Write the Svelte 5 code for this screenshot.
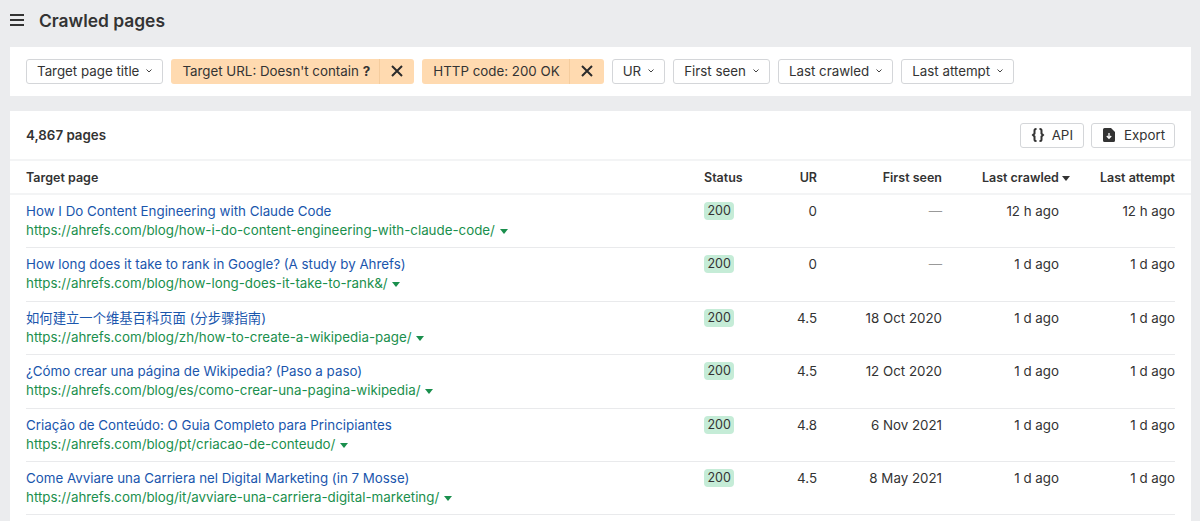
<script>
  const filters = ['UR', 'First seen', 'Last crawled', 'Last attempt'];
  const rows = [
    { title: 'How I Do Content Engineering with Claude Code', url: 'https://ahrefs.com/blog/how-i-do-content-engineering-with-claude-code/', ur: '0', first: '—', crawled: '12 h ago', attempt: '12 h ago' },
    { title: 'How long does it take to rank in Google? (A study by Ahrefs)', url: 'https://ahrefs.com/blog/how-long-does-it-take-to-rank&/', ur: '0', first: '—', crawled: '1 d ago', attempt: '1 d ago' },
    { title: '如何建立一个维基百科页面 (分步骤指南)', url: 'https://ahrefs.com/blog/zh/how-to-create-a-wikipedia-page/', ur: '4.5', first: '18 Oct 2020', crawled: '1 d ago', attempt: '1 d ago' },
    { title: '¿Cómo crear una página de Wikipedia? (Paso a paso)', url: 'https://ahrefs.com/blog/es/como-crear-una-pagina-wikipedia/', ur: '4.5', first: '12 Oct 2020', crawled: '1 d ago', attempt: '1 d ago' },
    { title: 'Criação de Conteúdo: O Guia Completo para Principiantes', url: 'https://ahrefs.com/blog/pt/criacao-de-conteudo/', ur: '4.8', first: '6 Nov 2021', crawled: '1 d ago', attempt: '1 d ago' },
    { title: 'Come Avviare una Carriera nel Digital Marketing (in 7 Mosse)', url: 'https://ahrefs.com/blog/it/avviare-una-carriera-digital-marketing/', ur: '4.5', first: '8 May 2021', crawled: '1 d ago', attempt: '1 d ago' }
  ];
</script>

{#snippet chevron()}
  <svg class="chev" width="6" height="4" viewBox="0 0 6 4"><path d="M.5.5L3 3 5.500.5" fill="none" stroke="currentColor" stroke-width="1" /></svg>
{/snippet}

{#snippet cross()}
  <svg width="12" height="12" viewBox="0 0 12 12"><path d="M1 1l10 10M11 1L1 11" fill="none" stroke="#2b2b2b" stroke-width="2" /></svg>
{/snippet}

<div class="page">
  <header class="top">
    <svg class="menu" width="14" height="12" viewBox="0 0 14 12"><path d="M0 1h14M0 6h14M0 11h14" fill="none" stroke="#333" stroke-width="1.8" /></svg>
    <h1>Crawled pages</h1>
  </header>

  <section class="filters">
    <button class="btn">Target page title {@render chevron()}</button>
    <div class="active">
      <span class="label">Target URL: Doesn't contain <b>?</b></span>
      <span class="close">{@render cross()}</span>
    </div>
    <div class="active">
      <span class="label">HTTP code: 200 OK</span>
      <span class="close">{@render cross()}</span>
    </div>
    {#each filters as f}
      <button class="btn">{f} {@render chevron()}</button>
    {/each}
  </section>

  <section class="results">
    <div class="summary">
      <strong>4,867 pages</strong>
      <div class="actions">
        <button class="btn api">
          <svg width="14" height="14" viewBox="0 0 14 14"><path d="M5.500 1H5a1.500 1.500 0 0 0-1.500 1.500v3L2 7l1.500 1.500v3A1.500 1.500 0 0 0 5 13h.5M8.500 1H9a1.500 1.500 0 0 1 1.500 1.500v3L12 7l-1.500 1.500v3A1.500 1.500 0 0 1 9 13h-.5" fill="none" stroke="#333" stroke-width="2" /></svg>
          API
        </button>
        <button class="btn export">
          <svg width="12" height="14" viewBox="0 0 12 14"><path d="M1.500 0H8l4 4v8.500a1.500 1.500 0 0 1-1.500 1.500h-9A1.500 1.500 0 0 1 0 12.500v-11A1.500 1.500 0 0 1 1.500 0z" fill="#333" /><path d="M6 5v5M3.800 8L6 10.300 8.200 8" fill="none" stroke="#fff" stroke-width="1.300" /></svg>
          Export
        </button>
      </div>
    </div>

    <div class="grid head">
      <div>Target page</div>
      <div>Status</div>
      <div class="num">UR</div>
      <div class="num">First seen</div>
      <div class="num">Last crawled <i class="sort"></i></div>
      <div class="num">Last attempt</div>
    </div>

    {#each rows as r}
      <div class="grid row">
        <div>
          <div class="title">{r.title}</div>
          <div class="url">{r.url} <i class="drop"></i></div>
        </div>
        <div><span class="badge">200</span></div>
        <div class="num">{r.ur}</div>
        <div class="num" class:dash={r.first === '—'}>{r.first}</div>
        <div class="num crawled">{r.crawled}</div>
        <div class="num">{r.attempt}</div>
      </div>
    {/each}
  </section>
</div>

<style>
  :global(body) {
    margin: 0;
    background: #ebecee;
    overflow: hidden;
  }
  .page {
    font-family: Inter, "Noto Sans CJK SC", sans-serif;
    font-size: 13.33px;
    color: #333;
    height: 521px;
    overflow: hidden;
  }
  .top {
    height: 47px;
    display: flex;
    align-items: center;
    padding-left: 10px;
    gap: 15px;
    box-sizing: border-box;
    padding-bottom: 7px;
  }
  h1 {
    margin: 0;
    font-size: 17.4px;
    font-weight: 600;
  }
  .filters {
    margin: 0 9px 15px 10px;
    height: 49px;
    box-sizing: border-box;
    padding-bottom: 1px;
    background: #fff;
    display: flex;
    align-items: center;
    padding-left: 16px;
    gap: 8px;
  }
  .btn {
    font: inherit;
    color: #333;
    height: 25px;
    padding: 0 10px;
    background: #fff;
    border: 1px solid #d4d6d9;
    border-radius: 3px;
    display: flex;
    align-items: center;
    gap: 7px;
    white-space: nowrap;
  }
  .chev {
    color: #444;
  }
  .active {
    height: 25px;
    display: flex;
    align-items: stretch;
    background: #ffdab0;
    border-radius: 3px;
    white-space: nowrap;
  }
  .label {
    padding: 0 9px 0 11px;
    display: flex;
    align-items: center;
    gap: 4px;
  }
  .close {
    width: 34px;
    display: flex;
    align-items: center;
    justify-content: center;
    border-left: 1px solid #f5cc9d;
  }
  .results {
    margin: 0 9px 0 10px;
    padding-bottom: 40px;
    background: #fff;
  }
  .summary {
    height: 48px;
    padding: 0 16px;
    display: flex;
    align-items: center;
    justify-content: space-between;
    border-bottom: 2px solid #f3f4f5;
  }
  .summary strong {
    font-weight: 600;
  }
  .actions {
    display: flex;
    gap: 7px;
  }
  .api {
    gap: 7px;
    padding-right: 10px;
  }
  .export {
    gap: 9px;
    padding: 0 9px 0 11px;
  }
  .grid {
    display: grid;
    grid-template-columns: 678px 70px 43px 125px 128px 105px;
    margin: 0 16px;
  }
  .head {
    height: 32px;
    align-items: center;
    font-weight: 600;
    font-size: 12.5px;
    margin: 0;
    padding: 0 16px;
    border-bottom: 2px solid #f3f4f5;
  }
  .row {
    height: 53.4px;
    box-sizing: border-box;
    padding-top: 7px;
    line-height: 19px;
    border-bottom: 1px solid #e9eaec;
  }
  .num {
    text-align: right;
  }
  .crawled {
    padding-right: 11px;
  }
  .dash {
    color: #999;
  }
  .title {
    color: #1a56ad;
  }
  .url {
    color: #1a8f4d;
  }
  .sort, .drop {
    display: inline-block;
    width: 0;
    height: 0;
    border-left: 4px solid transparent;
    border-right: 4px solid transparent;
    border-top: 5px solid #333;
    vertical-align: 1px;
  }
  .drop {
    border-top-color: #1a8f4d;
    margin-left: 1px;
  }
  .badge {
    display: inline-block;
    background: #c5ecd7;
    border-radius: 4px;
    font-size: 12.5px;
    line-height: 18px;
    padding: 0 3.5px;
    vertical-align: 1px;
  }
</style>
